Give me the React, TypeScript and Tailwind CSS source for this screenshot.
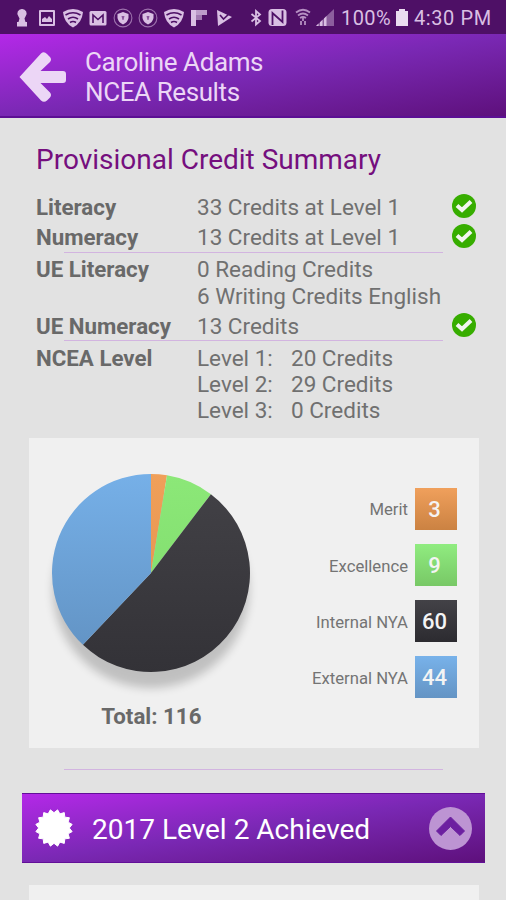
import { ReactNode } from "react"

type Credit = { label: string, count: number, top: string, bottom: string, box: string }

const credits: Credit[] = [
  { label: 'Merit', count: 3, top: '#f0a05a', bottom: '#e08c48', box: 'from-[#f0a05c] to-[#cb8242]' },
  { label: 'Excellence', count: 9, top: '#8ce878', bottom: '#7cd86a', box: 'from-[#90ec80] to-[#78c866]' },
  { label: 'Internal NYA', count: 60, top: '#434247', bottom: '#333237', box: 'from-[#434247] to-[#2c2b30]' },
  { label: 'External NYA', count: 44, top: '#76b0e8', bottom: '#6090c0', box: 'from-[#78b2ea] to-[#6494c4]' },
]

const total = credits.reduce((sum, c) => sum + c.count, 0)

const StatusIcon = ({ children }: { children: ReactNode }) => (
  <svg className="w-5 h-5 shrink-0" viewBox="0 0 20 20" fill="#d9bfe3">{children}</svg>
)

const WifiShield = () => (
  <StatusIcon>
    <path d="M0 4Q10-2 20 4Q19 15 10 19.500Q1 15 0 4Z" />
    <g fill="none" stroke="#4e1066" strokeWidth="1.600">
      <path d="M2.500 7Q10 2.500 17.500 7M5 11Q10 7.500 15 11M7 14.500Q10 12.500 13 14.500" />
    </g>
  </StatusIcon>
)

const ShieldRing = () => (
  <StatusIcon>
    <circle cx="10" cy="10" r="8.900" fill="none" stroke="#9d72ad" strokeWidth="1.100" />
    <path d="M10 4L15.500 6V10Q14.500 14.500 10 16.500Q5.500 14.500 4.500 10V6Z" />
    <path d="M8.500 8H11.500L10.500 12H9.500Z" fill="#8a559d" />
  </StatusIcon>
)

const StatusBar = () => (
  <div className="h-[34px] bg-[#4e1066] relative flex items-center text-[#d9bfe3] text-[20px] whitespace-nowrap">
    <div className="flex items-center gap-[5.300px] pl-3 pt-px">
      <StatusIcon>
        <path d="M10 1A4.500 4.500 0 0 1 13.500 8.500L12.500 10.500L13.500 14H15V18.500H5V14H6.500L7.500 10.500L6.500 8.500A4.500 4.500 0 0 1 10 1Z" />
      </StatusIcon>
      <StatusIcon>
        <path fillRule="evenodd" d="M3 2H17Q18 2 18 3V17Q18 18 17 18H3Q2 18 2 17V3Q2 2 3 2ZM4 4V16H16V4Z" />
        <path d="M5 14V11L8 9L10 11L12 8L15 11V14Z" />
      </StatusIcon>
      <WifiShield />
      <StatusIcon>
        <rect x="1.500" y="3" width="17" height="14.500" rx="1.500" />
        <path d="M5 15V7L10 11.500L15 7V15" fill="none" stroke="#4e1066" strokeWidth="1.600" />
      </StatusIcon>
      <ShieldRing />
      <ShieldRing />
      <WifiShield />
      <StatusIcon>
        <path d="M2 2H18V7H2Z" opacity=".8" />
        <path d="M7 7H13V12H7Z" opacity=".6" />
        <path d="M2 2H7V18H2Z" />
      </StatusIcon>
      <StatusIcon>
        <path d="M3 2L18 9L4 18Z" />
        <path d="M6 7L9.500 11L17 4" fill="none" stroke="#4e1066" strokeWidth="1.600" />
      </StatusIcon>
    </div>
    <svg className="absolute left-[249px] top-[7px] w-[86px] h-5" viewBox="0 0 86 20" fill="#d9bfe3">
      <path d="M2.500 7L11 14L7 17.500V4L11 7.500L2.500 14.500" fill="none" stroke="#d9bfe3" strokeWidth="1.800" />
      <rect x="19.500" y="2" width="18" height="17" rx="3.500" />
      <path d="M23.500 18V6L33.500 15V3.500" fill="none" stroke="#4e1066" strokeWidth="1.800" />
      <g fill="none" stroke="#b58fc2" strokeWidth="1.800">
        <path d="M47 5.500Q54 0 61 5.500M49 8.500Q54 4.500 59 8.500M51 11Q54 9 57 11" />
        <path d="M54 10V14M52 14V18M56 14V18" />
      </g>
      <path d="M67 19L85 2V19Z" opacity=".45" />
      <path d="M67 19L69.500 16.500V19ZM71 19V15.200L73.500 12.800V19ZM75 19V11.500L77.500 9V19Z" />
    </svg>
    <span className="absolute left-[341px] top-[4px] leading-7 tracking-[0.400px]">100%</span>
    <svg className="absolute left-[396px] top-[9px] w-3 h-[17px]" viewBox="0 0 12 17" fill="#eadcf0">
      <path d="M3 0H9V2H12V17H0V2H3Z" />
    </svg>
    <span className="absolute left-[414px] top-[4px] leading-7 tracking-[0.600px]">4:30 PM</span>
  </div>
)

const Header = () => (
  <header className="h-[84px] border-b-2 border-[#5c0f94] bg-linear-to-br from-[#b428e8] via-[#7a28b4] to-[#5e107c] flex items-center text-[#ecd6f6]">
    <svg className="ml-[19px] mt-[3px] w-12 h-[52px] shrink-0" viewBox="0 0 48 52">
      <path d="M0.500 26L22 2.500Q25 0 28 3L31 6Q33 8.500 31 11L21.500 20H44Q47 20 47 23V29Q47 32 44 32H21.500L31 41.500Q33 44 31 46.500L28 49.500Q25 52 22 49.500Z" fill="#ecd6f6" />
    </svg>
    <h1 className="ml-[18px] pt-[3px] text-[26px] leading-[30px] tracking-[-0.400px]">
      Caroline Adams<br />NCEA Results
    </h1>
  </header>
)

const Check = () => (
  <svg className="w-6 h-6 -mt-[3px]" viewBox="0 0 24 24">
    <circle cx="12" cy="12" r="12" fill="#37ad00" />
    <path d="M5 11.500L10 16L19 7.500" fill="none" stroke="#f2f5f0" strokeWidth="4" />
  </svg>
)

const Row = ({ title, done, children }: { title: string, done?: boolean, children: ReactNode }) => (
  <div className="grid grid-cols-[161px_255px_24px] items-center">
    <span className="self-start font-bold text-[22.300px] text-[#696969]">{title}</span>
    <div className="text-[#707070]">{children}</div>
    {done && <Check />}
  </div>
)

const Divider = () => (
  <div className="h-0.5 w-[379px] ml-16">
    <div className="h-px bg-[#d2b4e0]" />
  </div>
)

const point = (value: number) => {
  const a = value / total * Math.PI * 2
  return `${100 + 99 * Math.sin(a)} ${100 - 99 * Math.cos(a)}`
}

const Pie = () => {
  let start = 0
  return (
    <svg className="w-[200px] h-[200px] overflow-visible" viewBox="0 0 200 200">
      <defs>
        <filter id="soft" x="-20%" y="-20%" width="140%" height="140%">
          <feGaussianBlur stdDeviation="5" />
        </filter>
        {credits.map(c => (
          <linearGradient key={c.label} id={c.label.replace(' ', '')} gradientUnits="userSpaceOnUse" x1="0" y1="0" x2="0" y2="200">
            <stop offset="0" stopColor={c.top} />
            <stop offset="1" stopColor={c.bottom} />
          </linearGradient>
        ))}
      </defs>
      <circle cx="100" cy="117" r="98" fill="#000" opacity=".2" filter="url(#soft)" />
      {credits.map(c => {
        const end = start + c.count
        const d = `M100 100L${point(start)}A99 99 0 ${c.count * 2 > total ? 1 : 0} 1 ${point(end)}Z`
        start = end
        return <path key={c.label} d={d} fill={`url(#${c.label.replace(' ', '')})`} />
      })}
    </svg>
  )
}

// 16 teeth, shifted half a step so a notch sits at the top
const burst = Array.from({ length: 32 }, (_, i) => {
  const a = (i + 1) * Math.PI / 16
  const r = i % 2 ? 15.3 : 18.5
  return `${19 + r * Math.sin(a)},${19 - r * Math.cos(a)}`
}).join(' ')

const App = () => {
  return (
    <div className="w-[506px] h-[900px] overflow-hidden bg-[#e2e2e2] font-[Roboto,sans-serif]">
      <StatusBar />
      <Header />

      <main>
        <section className="pl-9">
          <h2 className="pt-6 h-[74px] text-[28px] leading-9 text-[#750f7e]">Provisional Credit Summary</h2>
          <div className="h-[60px] pt-0.5 flex flex-col gap-1 text-[22.500px] leading-[26px] whitespace-nowrap">
            <Row title="Literacy" done>33 Credits at Level 1</Row>
            <Row title="Numeracy" done>13 Credits at Level 1</Row>
          </div>
        </section>
        <Divider />
        <section className="pl-9 pt-0.5 h-[86px] flex flex-col gap-1 text-[22.500px] leading-[26.500px] whitespace-nowrap">
          <Row title="UE Literacy">0 Reading Credits<br />6 Writing Credits English</Row>
          <Row title="UE Numeracy" done>13 Credits</Row>
        </section>
        <Divider />
        <section className="pl-9 pt-[2.500px] h-[96px] text-[22.500px] leading-[26.400px] whitespace-nowrap">
          <Row title="NCEA Level">
            <div className="grid grid-cols-[94px_auto]">
              <span>Level 1:</span><span>20 Credits</span>
              <span>Level 2:</span><span>29 Credits</span>
              <span>Level 3:</span><span>0 Credits</span>
            </div>
          </Row>
        </section>

        <section className="ml-[29px] w-[450px] h-[310px] bg-[#f0f0f0] flex justify-between">
          <div className="pl-[22.400px] pt-[35px] flex flex-col items-center">
            <Pie />
            <p className="mt-[30px] text-[22.300px] leading-[26px] font-bold text-[#696969]">Total: {total}</p>
          </div>
          <ul className="pt-[49.500px] pr-[22px] flex flex-col gap-[14.300px]">
            {credits.map(c => (
              <li key={c.label} className="flex items-center justify-end gap-[7px] text-[16.700px] text-[#747474]">
                <span className="pt-[3px]">{c.label}</span>
                <span className={`w-[42px] h-[42px] bg-linear-to-b ${c.box} pr-[3px] pt-px flex items-center justify-center text-[22px] font-medium text-[#f4f4f4]`}>
                  {c.count}
                </span>
              </li>
            ))}
          </ul>
        </section>

        <div className="pt-[21px] pb-[22px]"><Divider /></div>

        <button className="ml-[22px] w-[463px] h-[70px] border-y border-[#620f98] bg-linear-to-br from-[#b428e8] via-[#7a28b4] to-[#5e107c] flex items-center text-white">
          <svg className="ml-[13px] w-[38px] h-[38px]" viewBox="0 0 38 38">
            <polygon points={burst} fill="#fff" stroke="#fff" strokeLinejoin="round" />
          </svg>
          <span className="ml-[19px] pt-[3px] text-[28px]">2017 Level 2 Achieved</span>
          <svg className="ml-auto mr-[13.500px] w-[43px] h-[43px]" viewBox="0 0 43 43">
            <circle cx="21.500" cy="21.500" r="21.500" fill="#bd94d3" />
            <path d="M21.500 10L35.500 24L31 28.500L21.500 19.500L12 28.500L7.500 24Z" fill="#6c20a0" stroke="#6c20a0" strokeLinejoin="round" />
          </svg>
        </button>

        <div className="mt-[22px] ml-[29px] w-[450px] h-10 bg-[#f0f0f0]" />
      </main>
    </div>
  )
}

export default App
